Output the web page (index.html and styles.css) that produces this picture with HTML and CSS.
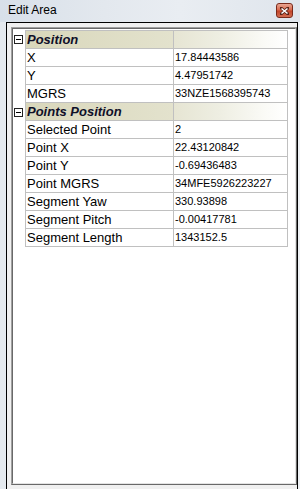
FILE: index.html
```html
<!DOCTYPE html>
<html>
<head>
<meta charset="utf-8">
<link rel="stylesheet" href="styles.css">
</head>
<body>
<div class="window">
  <div class="titlebar">
    <span class="title">Edit Area</span>
    <div class="close">
      <svg width="9" height="8" viewBox="0 0 9 8"><path d="M1 1 L8 7 M8 1 L1 7" stroke="#5a2418" stroke-width="3" stroke-linecap="square"/><path d="M1.5 1.5 L7.5 6.5 M7.5 1.5 L1.5 6.5" stroke="#fff" stroke-width="1.6"/></svg>
    </div>
  </div>
  <div class="frame">
    <div class="panel">
      <div class="panel-inner">
        <div class="pg">
          <div class="row cat">
            <div class="gutter"><span class="minus"></span></div>
            <div class="label">Position</div>
            <div class="value"></div>
          </div>
          <div class="row"><div class="gutter"></div><div class="label">X</div><div class="value">17.84443586</div></div>
          <div class="row"><div class="gutter"></div><div class="label">Y</div><div class="value">4.47951742</div></div>
          <div class="row"><div class="gutter"></div><div class="label">MGRS</div><div class="value">33NZE1568395743</div></div>
          <div class="row cat">
            <div class="gutter"><span class="minus"></span></div>
            <div class="label">Points Position</div>
            <div class="value"></div>
          </div>
          <div class="row"><div class="gutter"></div><div class="label">Selected Point</div><div class="value">2</div></div>
          <div class="row"><div class="gutter"></div><div class="label">Point X</div><div class="value">22.43120842</div></div>
          <div class="row"><div class="gutter"></div><div class="label">Point Y</div><div class="value">-0.69436483</div></div>
          <div class="row"><div class="gutter"></div><div class="label">Point MGRS</div><div class="value">34MFE5926223227</div></div>
          <div class="row"><div class="gutter"></div><div class="label">Segment Yaw</div><div class="value">330.93898</div></div>
          <div class="row"><div class="gutter"></div><div class="label">Segment Pitch</div><div class="value">-0.00417781</div></div>
          <div class="row"><div class="gutter"></div><div class="label">Segment Length</div><div class="value">1343152.5</div></div>
        </div>
      </div>
    </div>
  </div>
</div>
</body>
</html>
```

FILE: styles.css
```css
html, body {
  margin: 0;
  padding: 0;
}
body {
  width: 300px;
  height: 489px;
  overflow: hidden;
  background: #eef1f4;
  font-family: "Liberation Sans", Arial, sans-serif;
}
.window {
  width: 300px;
  height: 489px;
  display: flex;
  flex-direction: column;
  background: linear-gradient(to right, #e4e9ee, #eef1f4 40%, #eef1f4);
}
.titlebar {
  height: 22px;
  flex: none;
  display: flex;
  align-items: center;
  justify-content: space-between;
  padding: 0 7px 0 8px;
  background: linear-gradient(to right, #d8e0e9 0%, #e3e8ee 35%, #e9edf2 60%, #dfe5ec 100%);
}
.title {
  font-size: 12px;
  color: #000;
  line-height: 14px;
  margin-top: -2px;
}
.close {
  width: 15px;
  height: 13px;
  border: 1px solid #7a2a1b;
  border-radius: 3px;
  background: linear-gradient(#e9a793 0%, #d9694e 45%, #c2452a 55%, #d36e52 100%);
  display: flex;
  align-items: center;
  justify-content: center;
  margin-top: -1px;
}
.close svg { display: block; }
.frame {
  flex: 1;
  margin-left: 6px;
  width: 286px;
  border: 1px solid #000;
  border-bottom: none;
  padding: 4px 0 3px 4px;
  background: #f0f0f0;
  display: flex;
}
.panel {
  flex: 1;
  border: 1px solid;
  border-color: #a0a0a0 #696969 #696969 #a0a0a0;
  display: flex;
  margin-bottom: 1px;
}
.panel-inner {
  flex: 1;
  border: 1px solid;
  border-color: #696969 #e3e3e3 #e3e3e3 #696969;
  background: #fff;
  padding-top: 1px;
}
.pg {
  width: 275px;
}
.row {
  display: flex;
  height: 18px;
}
.gutter {
  width: 12px;
  flex: none;
  position: relative;
}
.label, .value {
  box-sizing: border-box;
  height: 18px;
  border-right: 1px solid #c0c0c0;
  border-bottom: 1px solid #c0c0c0;
  line-height: 17px;
  white-space: nowrap;
  overflow: hidden;
  color: #000;
}
.label {
  width: 149px;
  border-left: 1px solid #c0c0c0;
  font-size: 13px;
  padding-left: 1px;
}
.value {
  width: 114px;
  font-size: 11px;
  padding-left: 1px;
}
.row:first-child .label,
.row:first-child .value {
  border-top: 1px solid #c0c0c0;
  height: 19px;
}
.row:first-child { height: 19px; }
.cat .label {
  font-weight: bold;
  font-style: italic;
  color: #0f0f28;
  background: linear-gradient(to right, #d9d7bb, #e3e2cd);
}
.cat .value {
  background: linear-gradient(to right, #e6e5d3, #eeeee2 40%, #fafaf6 80%, #ffffff);
}
.minus {
  position: absolute;
  left: 1px;
  top: 5px;
  width: 7px;
  height: 7px;
  border: 1px solid #222;
  background: #fff;
}
.minus::after {
  content: "";
  position: absolute;
  left: 1px;
  top: 3px;
  width: 5px;
  height: 1px;
  background: #000;
}
```
